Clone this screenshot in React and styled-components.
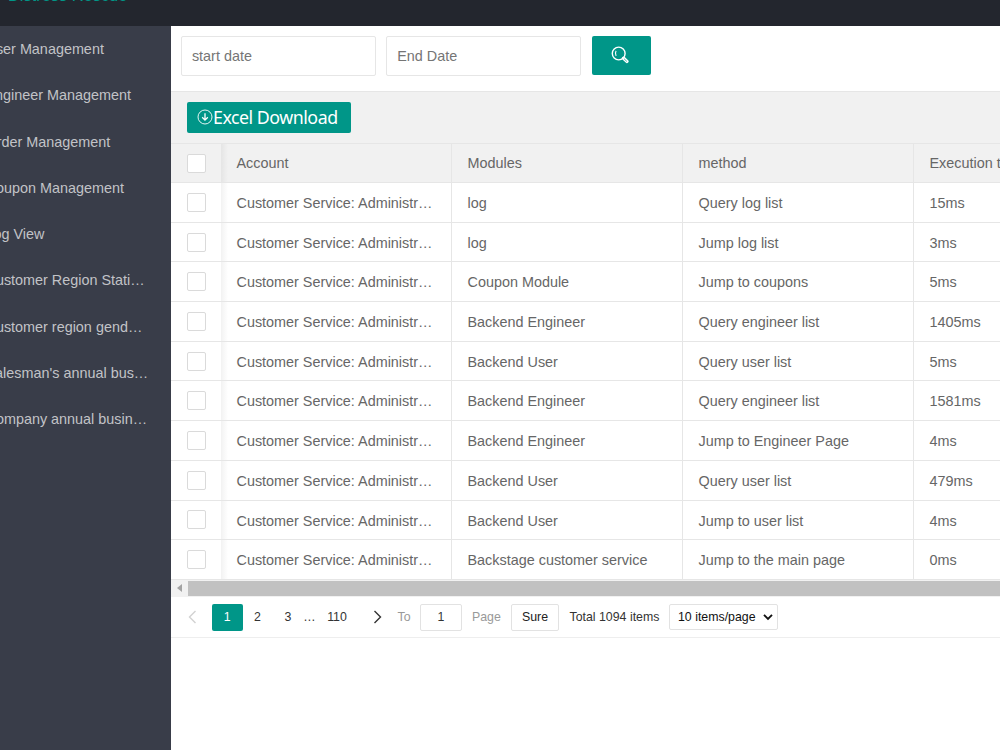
import React from 'react';
import styled, { createGlobalStyle } from 'styled-components';

const GlobalStyle = createGlobalStyle`
  * {
    box-sizing: border-box;
  }
  body {
    margin: 0;
    overflow: hidden;
    background: #fff;
    color: #666;
    font-family: 'Liberation Sans', Arial, sans-serif;
    font-size: 14.4px;
  }
  button,
  input {
    font-family: inherit;
    outline: none;
  }
`;

const Page = styled.div`
  display: flex;
  flex-direction: column;
  width: 1000px;
  height: 750px;
  overflow: hidden;
`;

const Header = styled.header`
  flex: none;
  height: 26px;
  overflow: hidden;
  background: #23262e;
`;

const Logo = styled.div`
  margin: -15px 0 0 8px;
  color: #009688;
  font-size: 16.4px;
  line-height: 20px;
  white-space: nowrap;
`;

const Body = styled.div`
  flex: 1;
  display: flex;
  min-height: 0;
`;

const Sidebar = styled.nav`
  flex: none;
  width: 170.5px;
  overflow: hidden;
  background: #393d49;
`;

const NavItem = styled.a`
  display: block;
  margin-left: -14.5px;
  height: 46.27px;
  line-height: 47.2px;
  color: #c2c3c7;
  white-space: nowrap;
`;

const Main = styled.main`
  flex: 1;
  min-width: 0;
  overflow: hidden;
`;

const SearchBar = styled.div`
  display: flex;
  gap: 10px;
  height: 65px;
  padding: 10px 0 0 10.4px;
`;

const DateInput = styled.input`
  width: 195.3px;
  height: 39.5px;
  padding: 0 10px;
  border: 1px solid #e6e6e6;
  border-radius: 2px;
  font-size: 14.4px;
  &::placeholder {
    color: #757575;
  }
`;

const SearchButton = styled.button`
  display: flex;
  align-items: center;
  justify-content: center;
  width: 59px;
  height: 39px;
  margin-left: 0.4px;
  padding: 0 3px 2px 0;
  border: none;
  border-radius: 2px;
  background: #009688;
  color: #fff;
`;

const Toolbar = styled.div`
  height: 52px;
  padding: 10px 0 0 16px;
  border-top: 1px solid #e6e6e6;
  background: #f1f1f1;
`;

const ExcelButton = styled.button`
  display: flex;
  align-items: center;
  width: 164.5px;
  height: 31px;
  padding: 0 0 1px 10.5px;
  border: none;
  border-radius: 2px;
  background: #009688;
  color: #fff;
  font-family: 'Noto Sans', 'Open Sans', sans-serif;
  font-size: 17.8px;
  line-height: 24px;
  letter-spacing: -0.48px;
  white-space: nowrap;
`;

const Row = styled.div`
  display: flex;
  width: 1100px;
  height: ${(p) => (p.$head ? '40px' : '39.7px')};
  background: ${(p) => (p.$head ? '#f1f1f1' : '#fff')};
  border-top: ${(p) => (p.$head ? '1px solid #e6e6e6' : 'none')};
  border-bottom: 1px solid #e6e6e6;
`;

const CheckCell = styled.div`
  display: flex;
  align-items: center;
  flex: none;
  width: 50px;
  padding-left: 16px;
`;

const Checkbox = styled.span`
  width: 19px;
  height: 19px;
  border: 1px solid #dadada;
  border-radius: 2px;
  background: #fff;
`;

const Cell = styled.div`
  flex: none;
  width: 231px;
  padding: 0 15px 0 16px;
  border-right: 1px solid #e6e6e6;
  line-height: ${(p) => (p.$head ? '39.4px' : '40.4px')};
  white-space: nowrap;
  /* shade cast by the fixed checkbox column */
  background: ${(p) =>
    p.$first ? 'linear-gradient(to right, rgba(0, 0, 0, 0.05), transparent 7px)' : 'none'};
`;

const ScrollTrack = styled.div`
  display: flex;
  align-items: center;
  height: 17px;
  background: #f1f1f1;
`;

const ScrollArrow = styled.span`
  width: 0;
  height: 0;
  margin: 0 6px 0 6px;
  border: 4px solid transparent;
  border-left: none;
  border-right: 5px solid #a3a3a3;
`;

const ScrollThumb = styled.div`
  flex: 1;
  height: 15px;
  background: #c1c1c1;
`;

const Pager = styled.div`
  display: flex;
  align-items: center;
  height: 41.5px;
  padding-left: 16px;
  border-bottom: 1px solid #eee;
  color: #333;
  font-size: 12.35px;
  white-space: nowrap;
`;

const PageItem = styled.a`
  display: flex;
  align-items: center;
  justify-content: ${(p) => (p.$left ? 'flex-start' : 'center')};
  flex: none;
  width: ${(p) => p.$w}px;
  height: 27px;
  border-radius: 2px;
  background: ${(p) => (p.$active ? '#009688' : 'transparent')};
  color: ${(p) => (p.$active ? '#fff' : '#333')};
`;

const Muted = styled.span`
  flex: none;
  width: ${(p) => p.$w}px;
  color: #999;
`;

const PageInput = styled.input`
  flex: none;
  width: 42px;
  height: 27px;
  margin-right: 10px;
  padding: 0;
  border: 1px solid #e2e2e2;
  border-radius: 2px;
  color: #333;
  font-size: 12.35px;
  text-align: center;
`;

const SureButton = styled.button`
  flex: none;
  width: 48px;
  height: 27px;
  padding: 0;
  border: 1px solid #e2e2e2;
  border-radius: 2px;
  background: #fff;
  color: #222;
  font-size: 12.35px;
`;

const Total = styled.span`
  flex: none;
  width: 110px;
  padding-left: 10.5px;
`;

const PageSize = styled.div`
  display: flex;
  align-items: center;
  justify-content: space-between;
  flex: none;
  width: 109px;
  height: 26px;
  margin-bottom: 1px;
  padding: 0 4px 0 8px;
  border: 1px solid #e2e2e2;
  border-radius: 2px;
  color: #111;
`;

const menus = [
  'User Management',
  'Engineer Management',
  'Order Management',
  'Coupon Management',
  'Log View',
  'Customer Region Stati…',
  'Customer region gend…',
  "Salesman's annual bus…",
  'Company annual busin…',
];

const account = 'Customer Service: Administr…';

const logs = [
  ['log', 'Query log list', '15ms'],
  ['log', 'Jump log list', '3ms'],
  ['Coupon Module', 'Jump to coupons', '5ms'],
  ['Backend Engineer', 'Query engineer list', '1405ms'],
  ['Backend User', 'Query user list', '5ms'],
  ['Backend Engineer', 'Query engineer list', '1581ms'],
  ['Backend Engineer', 'Jump to Engineer Page', '4ms'],
  ['Backend User', 'Query user list', '479ms'],
  ['Backend User', 'Jump to user list', '4ms'],
  ['Backstage customer service', 'Jump to the main page', '0ms'],
];

const SearchIcon = () => (
  <svg width="18" height="18" viewBox="0 0 18 18" fill="none" stroke="currentColor">
    <circle cx="7.7" cy="7.5" r="6.4" strokeWidth="1.4" />
    <path d="M5.1 4.9Q3.6 7.3 5.1 9.9" strokeWidth="1.1" />
    <path d="M12.6 12.2L15.9 15.4" strokeWidth="3.4" strokeLinecap="round" />
    <path d="M13.2 12.9L15.6 15.2" stroke="#009688" strokeWidth="0.7" strokeLinecap="round" />
  </svg>
);

const DownloadIcon = () => (
  <svg width="16" height="16" viewBox="0 0 16 16" fill="none" stroke="currentColor">
    <circle cx="8" cy="8" r="7" strokeWidth="0.9" />
    <path d="M8 4.3v6.8M5.2 8.3L8 11.1l2.8-2.8" strokeWidth="1.3" />
  </svg>
);

const Chevron = ({ d, color }) => (
  <svg width="10" height="14" viewBox="0 0 10 14" fill="none" stroke={color} strokeWidth="1.4">
    <path d={d} />
  </svg>
);

const LogRow = ({ head, cells }) => (
  <Row $head={head}>
    <CheckCell>
      <Checkbox />
    </CheckCell>
    {cells.map((text, i) => (
      <Cell key={i} $head={head} $first={i === 0}>
        {text}
      </Cell>
    ))}
  </Row>
);

const App = () => (
  <Page>
    <GlobalStyle />
    <Header>
      <Logo>Distress Rescue</Logo>
    </Header>
    <Body>
      <Sidebar>
        {menus.map((m) => (
          <NavItem key={m}>{m}</NavItem>
        ))}
      </Sidebar>
      <Main>
        <SearchBar>
          <DateInput placeholder="start date" />
          <DateInput placeholder="End Date" />
          <SearchButton>
            <SearchIcon />
          </SearchButton>
        </SearchBar>
        <Toolbar>
          <ExcelButton>
            <DownloadIcon />
            Excel Download
          </ExcelButton>
        </Toolbar>
        <LogRow head cells={['Account', 'Modules', 'method', 'Execution time']} />
        {logs.map((row, i) => (
          <LogRow key={i} cells={[account, ...row]} />
        ))}
        <ScrollTrack>
          <ScrollArrow />
          <ScrollThumb />
        </ScrollTrack>
        <Pager>
          <PageItem $w={25} $left>
            <Chevron d="M8.5 1L2.5 7l6 6" color="#d2d2d2" />
          </PageItem>
          <PageItem $w={31.5} $active>
            1
          </PageItem>
          <PageItem $w={29}>2</PageItem>
          <PageItem $w={32}>3</PageItem>
          <PageItem $w={11}>…</PageItem>
          <PageItem $w={44}>110</PageItem>
          <PageItem $w={38.5}>
            <Chevron d="M1.5 1L7.5 7l-6 6" color="#333" />
          </PageItem>
          <Muted $w={22.5}>To</Muted>
          <PageInput defaultValue="1" />
          <Muted $w={39}>Page</Muted>
          <SureButton>Sure</SureButton>
          <Total>Total 1094 items</Total>
          <PageSize>
            10 items/page
            <svg width="10" height="8" viewBox="0 0 10 8" fill="none" stroke="#111" strokeWidth="1.9">
              <path d="M1 1.8l4 4 4-4" />
            </svg>
          </PageSize>
        </Pager>
      </Main>
    </Body>
  </Page>
);

export default App;
